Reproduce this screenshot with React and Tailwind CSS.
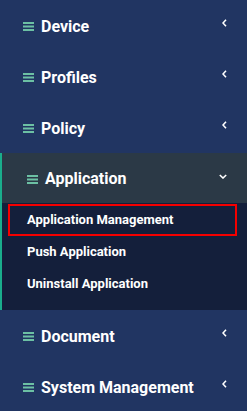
import React from 'react';

const items = ['Device', 'Profiles', 'Policy'];
const subItems = [
    { label: 'Application Management', active: true },
    { label: 'Push Application' },
    { label: 'Uninstall Application' },
];

function Bars() {
    return (
        <svg width="11" height="9" viewBox="0 0 11 9" className="shrink-0">
            <rect x="0" y="0" width="11" height="2" fill="#6cc0a4" />
            <rect x="0" y="3.5" width="11" height="2" fill="#6cc0a4" />
            <rect x="0" y="7" width="11" height="2" fill="#6cc0a4" />
        </svg>
    );
}

function ChevronLeft() {
    return (
        <svg width="5" height="8" viewBox="0 0 5 8" className="mb-[7px]">
            <path d="M4 0.8 L1 4 L4 7.2" fill="none" stroke="#fff" strokeWidth="1.6" />
        </svg>
    );
}

function ChevronDown() {
    return (
        <svg width="8" height="5" viewBox="0 0 8 5" className="mb-[6px]">
            <path d="M0.8 1 L4 4 L7.2 1" fill="none" stroke="#fff" strokeWidth="1.6" />
        </svg>
    );
}

function MenuRow({ label }) {
    return (
        <div className="flex h-[51px] items-center pl-[23px] pr-[20px] pt-[2px]">
            <Bars />
            <span className="ml-[7px] flex-1 text-[16px] font-bold text-white">{label}</span>
            <ChevronLeft />
        </div>
    );
}

export default function App() {
    return (
        <div
            className="w-[247px] h-[411px] overflow-hidden bg-[#213562]"
            style={{ fontFamily: 'Roboto, sans-serif' }}
        >
            {items.map((label) => (
                <MenuRow key={label} label={label} />
            ))}

            <div className="border-l-2 border-[#1aad8c]">
                <div className="flex h-[50px] items-center bg-[#2b3946] pl-[25px] pr-[20px] pt-[2px]">
                    <Bars />
                    <span className="ml-[7px] flex-1 text-[16px] font-bold text-white">Application</span>
                    <ChevronDown />
                </div>
                <div className="bg-[#141f3b] pt-[1px] pb-[10px]">
                    {subItems.map((item) => (
                        <div
                            key={item.label}
                            className={
                                'ml-[6px] mr-[10px] flex h-[32px] items-center border-2 pl-[17px] text-[13px] font-bold text-white ' +
                                (item.active ? 'border-[#f50000]' : 'border-transparent')
                            }
                        >
                            {item.label}
                        </div>
                    ))}
                </div>
            </div>

            <MenuRow label="Document" />
            <MenuRow label="System Management" />
        </div>
    );
}
